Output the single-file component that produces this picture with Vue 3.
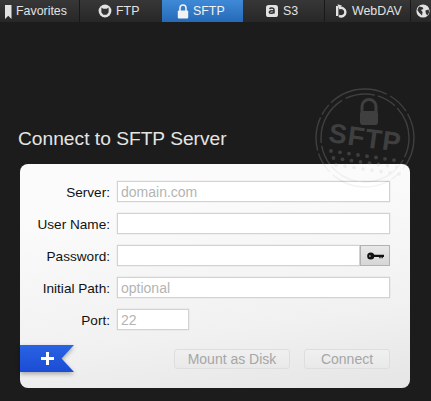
<template>
  <div class="page">
    <nav class="tabs">
      <div
        v-for="tab in tabs"
        :key="tab.icon"
        class="tab"
        :class="{ active: tab.name === 'SFTP', divided: tab.divided }"
        :style="{ width: tab.width + 'px', paddingLeft: tab.pad + 'px', gap: tab.gap + 'px' }"
      >
        <svg class="tab-icon" width="14" height="16" viewBox="0 0 14 16">
          <path v-if="tab.icon === 'bookmark'" d="M3 2h6.5v14L6.25 12.8 3 16z" fill="currentColor" />
          <g v-else-if="tab.icon === 'ftp'">
            <circle cx="7" cy="8" r="6.4" fill="currentColor" />
            <path d="M3.4 4.6l1.8 1.1h3.6l1.8-1.1v4.8L8.6 11.8H5.4L3.4 9.4z" fill="#333" />
          </g>
          <g v-else-if="tab.icon === 'lock'">
            <path d="M4 8V5a3 3 0 0 1 6 0v3" fill="none" stroke="currentColor" stroke-width="1.6" />
            <rect x="1.8" y="7.4" width="10.4" height="8" rx="1" fill="currentColor" />
          </g>
          <g v-else-if="tab.icon === 's3'">
            <rect x="1" y="2" width="12" height="12" rx="2.6" fill="currentColor" />
            <path d="M4.6 6c.6-1.2 4.4-1.4 4.4.6v4M9 8c-3-.6-4.8 0-4.6 1.4.2 1.4 3.4 1.2 4.6-.4" fill="none" stroke="#333" stroke-width="1.5" />
          </g>
          <g v-else-if="tab.icon === 'webdav'">
            <path d="M2 3h2.4v10H2z" fill="currentColor" />
            <path d="M5 5.4a4.3 4.3 0 1 1 0 7.5" fill="none" stroke="currentColor" stroke-width="2.4" />
            <path d="M3.4 1.2l4.4 1.2-2.6 3.4z" fill="currentColor" />
          </g>
          <g v-else>
            <circle cx="7" cy="8" r="6.6" fill="currentColor" />
            <path d="M3 3.6l3.6.6.8 1.8-2.4 1 1.6 2-.6 3.4L3 9.6 1.4 7zM9.4 7.4l3.2-.8.6 3-2 3-1.4-2.4z" fill="#333" />
          </g>
        </svg>
        <span v-if="tab.name">{{ tab.name }}</span>
      </div>
    </nav>

    <main class="content">
      <svg
        v-for="layer in ['stamp under', 'stamp ghost']"
        :key="layer"
        :class="layer"
        width="104"
        height="104"
        viewBox="0 0 104 104"
      >
        <circle cx="52" cy="52" r="49" class="ring" stroke-dasharray="34 3 12 3 60 4 22 3" />
        <circle cx="52" cy="52" r="44" class="ring" stroke-dasharray="20 3 50 4 30 3" />
        <path d="M49 26v-5.5a7 7 0 0 1 14 0V26" class="shackle" />
        <rect x="47" y="25" width="18" height="14" rx="3" class="ink" />
        <text x="52" y="61" text-anchor="middle" class="stamp-text" transform="rotate(8 52 54)">SFTP</text>
        <g class="ink">
          <circle v-for="dot in dots" :key="dot.x + '-' + dot.y" :cx="dot.x" :cy="dot.y" r="1.9" />
        </g>
      </svg>

      <h1 class="title">Connect to SFTP Server</h1>

      <section class="card">
        <form class="form" @submit.prevent>
          <template v-for="field in fields" :key="field.label">
            <label class="label">{{ field.label }}:</label>
            <div class="control">
              <input
                class="input"
                :class="{ short: field.short }"
                type="text"
                :placeholder="field.placeholder"
              />
              <button v-if="field.key" class="key-btn" type="button">
                <svg width="17" height="8" viewBox="0 0 20 9">
                  <circle cx="4.4" cy="4.5" r="4.2" fill="#111" />
                  <path d="M7 3h13v2.6h-1.4v1.4h-1.6V5.6h-1v1.4h-1.6V5.6H7z" fill="#111" />
                  <circle cx="3.4" cy="4.5" r="1" fill="#ccc" />
                </svg>
              </button>
            </div>
          </template>
        </form>

        <div class="actions">
          <div class="ribbon-wrap">
            <div class="ribbon">
              <svg width="13" height="13" viewBox="0 0 13 13">
                <path d="M5 0h3v5h5v3H8v5H5V8H0V5h5z" fill="#fff" />
              </svg>
            </div>
          </div>
          <button class="btn disk" type="button">Mount as Disk</button>
          <button class="btn connect" type="button">Connect</button>
        </div>
      </section>
    </main>
  </div>
</template>

<script setup>
const tabs = [
  { name: 'Favorites', icon: 'bookmark', width: 80, pad: 2, gap: 0, divided: true },
  { name: 'FTP', icon: 'ftp', width: 82, pad: 18, gap: 4 },
  { name: 'SFTP', icon: 'lock', width: 81, pad: 14, gap: 3 },
  { name: 'S3', icon: 's3', width: 82, pad: 22, gap: 4, divided: true },
  { name: 'WebDAV', icon: 'webdav', width: 86, pad: 9, gap: 4, divided: true },
  { name: '', icon: 'globe', width: 20, pad: 5, gap: 0 },
]

const fields = [
  { label: 'Server', placeholder: 'domain.com' },
  { label: 'User Name', placeholder: '' },
  { label: 'Password', placeholder: '', key: true },
  { label: 'Initial Path', placeholder: 'optional' },
  { label: 'Port', placeholder: '22', short: true },
]

// halftone band under the stamp lettering
const dots = []
for (let row = 0; row < 3; row++) {
  for (let i = 0; i < 8; i++) {
    dots.push({ x: 18 + i * 9 + row * 2.5, y: 65 + row * 7 + i * 1.3 })
  }
}
</script>

<style>
html,
body {
  margin: 0;
  background: #1c1c1c;
}
</style>

<style scoped>
.page {
  width: 431px;
  height: 401px;
  overflow: hidden;
  display: flex;
  flex-direction: column;
  background: #1c1c1c;
  font-family: "Liberation Sans", Arial, sans-serif;
}
.tabs {
  display: flex;
  flex-shrink: 0;
  height: 22px;
  background: linear-gradient(#373737, #272727);
}
.tab {
  box-sizing: border-box;
  flex-shrink: 0;
  overflow: hidden;
  display: flex;
  align-items: center;
  color: #e2e2e2;
  font-size: 12.4px;
}
.tab.divided {
  border-right: 1px solid #191919;
}
.tab.active {
  background: linear-gradient(#3f8ad8, #2569b8);
  color: #f2f2f2;
}
.tab-icon {
  flex-shrink: 0;
}
.content {
  position: relative;
  flex: 1;
  display: flex;
  flex-direction: column;
  padding: 105px 21px 0 18px;
}
.stamp {
  position: absolute;
  left: 313px;
  top: 64px;
  color: #434343;
}
.stamp.ghost {
  z-index: 1;
  color: #000;
  opacity: 0.045;
  pointer-events: none;
}
.ring {
  fill: none;
  stroke: currentColor;
  stroke-width: 1.4;
}
.shackle {
  fill: none;
  stroke: currentColor;
  stroke-width: 3;
}
.ink {
  fill: currentColor;
}
.stamp-text {
  font-family: "Liberation Sans", Arial, sans-serif;
  font-weight: 700;
  font-size: 27px;
  letter-spacing: 1px;
  fill: currentColor;
}
.title {
  position: relative;
  margin: 0 0 14px;
  font-size: 19.2px;
  line-height: 23px;
  font-weight: 400;
  color: #e4e4e4;
}
.card {
  position: relative;
  height: 224px;
  margin-left: 2px;
  box-sizing: border-box;
  padding: 17px 20px 0 0;
  border-radius: 8px;
  background: linear-gradient(172deg, #fbfbfb 20%, #f1f1f1 70%, #e5e5e5 100%);
}
.form {
  display: grid;
  grid-template-columns: 90px 1fr;
  column-gap: 7px;
  row-gap: 11px;
  align-items: center;
}
.label {
  padding-top: 2px;
  text-align: right;
  font-size: 13.6px;
  color: #111;
}
.control {
  display: flex;
  height: 21px;
}
.input {
  flex: 1;
  min-width: 0;
  box-sizing: border-box;
  height: 21px;
  padding: 1px 3px 0;
  margin: 0;
  background: #fff;
  border: 1px solid #d2d2d2;
  box-shadow: 0 0 1px rgba(0, 0, 0, 0.2);
  font: 14px "Liberation Sans", Arial, sans-serif;
  color: #222;
  outline: 0;
}
.input::placeholder {
  color: #b4b4b4;
  opacity: 1;
}
.input.short {
  flex: none;
  width: 72px;
}
.key-btn {
  width: 30px;
  height: 21px;
  padding: 0;
  display: flex;
  align-items: center;
  justify-content: center;
  background: linear-gradient(#e8e8e8, #d6d6d6);
  border: 1px solid #b2b2b2;
}
.actions {
  display: flex;
  justify-content: flex-end;
  gap: 14px;
  margin-top: 19px;
}
.btn {
  height: 20px;
  padding: 0;
  font: 14px "Liberation Sans", Arial, sans-serif;
  color: #a6a6a6;
  background: linear-gradient(#f0f0f0, #e9e9e9);
  border: 1px solid #dedede;
  border-radius: 3px;
}
.disk {
  width: 116px;
}
.connect {
  width: 86px;
}
.ribbon-wrap {
  position: absolute;
  left: 0;
  top: 181px;
  filter: drop-shadow(0 2px 2px rgba(0, 0, 0, 0.3));
}
.ribbon {
  width: 54px;
  height: 27px;
  display: flex;
  align-items: center;
  justify-content: center;
  background: linear-gradient(#2a63e4, #1a4cd4);
  clip-path: polygon(0 0, 100% 0, 77% 50%, 100% 100%, 0 100%);
}
</style>
